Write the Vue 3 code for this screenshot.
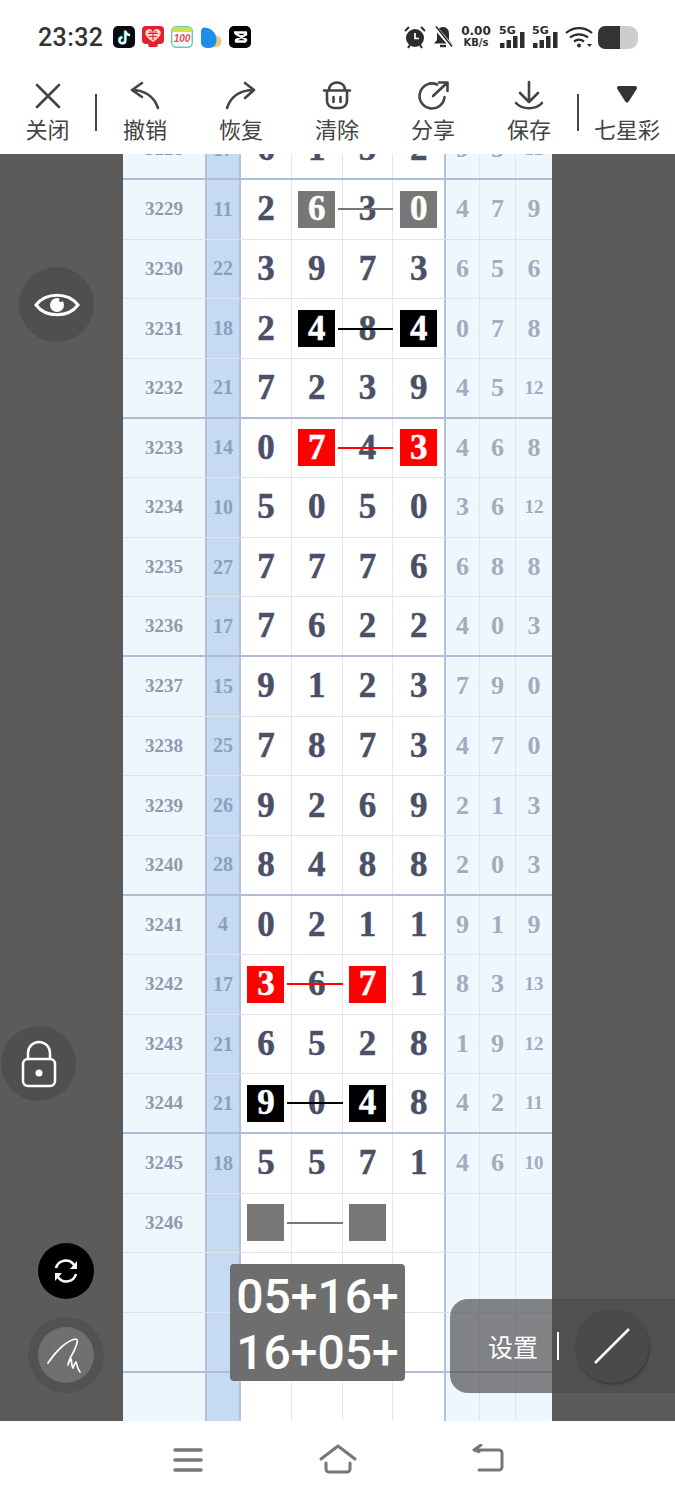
<template>
  <div class="screen">
    <header class="top">
      <div class="status">
        <span class="clock">23:32</span>
        <div class="apps">
          <svg class="app" viewBox="0 0 22 22">
            <rect width="22" height="22" rx="5" fill="#0b0b12" />
            <path d="M12 4.500v9.500a3 3 0 1 1-3-3M12 4.500c.4 2.600 2 4 4.500 4.300" fill="none" stroke="#25f4ee" stroke-width="2.400" />
            <path d="M12.600 5v9.500a3 3 0 1 1-3-3M12.600 5c.4 2.600 2 4 4.500 4.300" fill="none" stroke="#fff" stroke-width="2" />
          </svg>
          <svg class="app" viewBox="0 0 22 22">
            <path d="M4 0h14a4 4 0 0 1 4 4v10a4 4 0 0 1-4 4h-2l-1 3H7l-1-3H4a4 4 0 0 1-4-4V4a4 4 0 0 1 4-4z" fill="#e3202f" />
            <path d="M11 16C5 12 2.500 9 3.500 5.500 5 2 9.500 2 11 5.500 12.500 2 17 2 18.500 5.500 19.500 9 17 12 11 16z" fill="#f8d3c8" />
            <path d="M6 7.500h10M11 4v10M7 10.500h8M8 5l1 2M14 5l-1 2" stroke="#e3202f" stroke-width="1.100" />
          </svg>
          <svg class="app" viewBox="0 0 22 22">
            <rect x=".7" y=".7" width="20.600" height="20.600" rx="4.500" fill="#fff" stroke="#6fc4c2" stroke-width="1.400" />
            <path d="M1 5a4 4 0 0 1 4-4h12a4 4 0 0 1 4 4v1H1z" fill="#cfe24a" />
            <text x="11" y="15.500" text-anchor="middle" class="hundred">100</text>
          </svg>
          <svg class="app" viewBox="0 0 22 22">
            <circle cx="15.500" cy="15.500" r="6" fill="#f3c27d" />
            <path d="M1 5a4 4 0 0 1 6-3c6 1 9.500 6 9.500 12 0 5-3 8-7.500 8-5.500 0-8-2-8-6z" fill="#1e8fe8" />
          </svg>
          <svg class="app" viewBox="0 0 22 22">
            <rect width="22" height="22" rx="5" fill="#000" />
            <path d="M5 6.500h12v2L7 14v1.500h10M17 15.500v-2L7 8V6.500" fill="none" stroke="#fff" stroke-width="2.400" stroke-linejoin="round" />
          </svg>
        </div>
        <div class="sys">
          <svg class="alarm" viewBox="0 0 22 24">
            <circle cx="11" cy="13" r="9" fill="#2c2c2c" />
            <path d="M11 8v5.500h4" fill="none" stroke="#fff" stroke-width="1.700" />
            <path d="M1 6l4-4M21 6l-4-4M4 23l2-3M18 23l-2-3" stroke="#2c2c2c" stroke-width="2" />
          </svg>
          <svg class="bell" viewBox="0 0 20 24">
            <path d="M10 2c4 0 6 3 6 7v6l3 3.500H1L4 15V9c0-4 2-7 6-7z" fill="#2c2c2c" />
            <path d="M7 21h6" stroke="#2c2c2c" stroke-width="2.400" />
            <path d="M2 2l17 20" stroke="#fff" stroke-width="4" />
            <path d="M3 1.500l16 20" stroke="#2c2c2c" stroke-width="1.600" />
          </svg>
          <div class="speed"><b>0.00</b><span>KB/s</span></div>
          <svg class="signal" viewBox="0 0 26 24" v-for="n in 2" :key="n">
            <text x="0" y="9" class="fiveg">5G</text>
            <path d="M1 18h4.500v5H1zM7.500 15h4.500v8H7.500zM14 11h4.500v12H14zM21 7h4.500v16H21z" fill="#2c2c2c" />
          </svg>
          <svg class="wifi" viewBox="0 0 28 22">
            <path d="M1 7c7.500-6.500 18.500-6.500 26 0M5 11.500c5-4.300 13-4.300 18 0M9 15.500c3-2.300 7-2.300 10 0" fill="none" stroke="#2c2c2c" stroke-width="2.300" />
            <circle cx="14" cy="19.500" r="2" fill="#2c2c2c" />
            <path d="M22 18h5l-2.500 3z" fill="#2c2c2c" />
          </svg>
          <div class="battery"></div>
        </div>
      </div>

      <nav class="tools">
        <template v-for="t in tools" :key="t.label">
          <div class="tool" :class="t.cls">
            <svg class="tool-icon" viewBox="0 0 34 34" v-html="t.icon"></svg>
            <span>{{ t.label }}</span>
          </div>
          <i v-if="t.sep" class="tool-sep"></i>
        </template>
      </nav>
    </header>

    <main class="stage">
      <div class="chart">
        <div class="rows">
          <div v-for="(r, i) in rows" :key="i" class="row" :class="{ group: i % 4 === 0 }">
            <div class="cell id">{{ r.id }}</div>
            <div class="cell sum">{{ r.sum }}</div>
            <div v-for="(d, j) in r.nums" :key="j" class="cell num">
              <span v-if="r.mark && r.mark.at.includes(j)" class="box" :class="r.mark.color">{{ d }}</span>
              <template v-else>{{ d }}</template>
              <i v-if="r.mark && j === r.mark.at[0] + 1" class="link" :class="r.mark.color"></i>
            </div>
            <div v-for="(d, j) in r.ext" :key="j" class="cell ext" :class="{ small: d > 9 }">{{ d }}</div>
          </div>
        </div>
      </div>

      <button class="fab eye">
        <svg viewBox="0 0 46 32" width="46" height="32">
          <path d="M2 16C12 3 34 3 44 16 34 29 12 29 2 16z" fill="none" stroke="#fff" stroke-width="3" />
          <circle cx="23" cy="16" r="7" fill="#fff" />
          <circle cx="27" cy="11" r="2" fill="#4f4f4f" />
        </svg>
      </button>
      <button class="fab lock">
        <svg viewBox="0 0 36 48" width="36" height="48">
          <path d="M7 19V13a11 11 0 0 1 22 0v6" fill="none" stroke="#fff" stroke-width="2.500" />
          <rect x="2" y="19" width="32" height="27" rx="5" fill="none" stroke="#fff" stroke-width="2.500" />
          <circle cx="18" cy="33" r="3.500" fill="#fff" />
        </svg>
      </button>
      <button class="fab sync">
        <svg viewBox="0 0 32 32" width="32" height="32">
          <path d="M6 13a10 10 0 0 1 18-3M26 19a10 10 0 0 1-18 3" fill="none" stroke="#fff" stroke-width="2.500" />
          <path d="M27 6v8h-7zM5 26v-8h7z" fill="#fff" />
        </svg>
      </button>
      <button class="fab pen">
        <svg viewBox="0 0 38 38" width="38" height="38">
          <path d="M1 27C8 16 20 4 29 3c3 1 0 7-2 12-2 4-5 8-6 14 1-3 2-5 3-6 1 2 0 6 2 9 1-3 2-5 3-6 1 3 1 6 4 10" fill="none" stroke="#fff" stroke-width="1.700" stroke-linecap="round" stroke-linejoin="round" />
        </svg>
      </button>

      <div class="formula">
        <div>05+16+</div>
        <div>16+05+</div>
      </div>

      <div class="settings">
        <span class="settings-label">设置</span>
        <i class="settings-sep"></i>
        <div class="settings-btn">
          <svg viewBox="0 0 38 38" width="38" height="38">
            <path d="M2 36L36 2" stroke="#fff" stroke-width="2.500" />
          </svg>
        </div>
      </div>
    </main>

    <footer class="navbar">
      <svg viewBox="0 0 40 32" class="nav-icon">
        <path d="M7 6h26M7 16h26M7 26h26" stroke="#777" stroke-width="3.500" stroke-linecap="round" />
      </svg>
      <svg viewBox="0 0 40 32" class="nav-icon">
        <path d="M3 15L20 2l17 13" fill="none" stroke="#777" stroke-width="3" stroke-linecap="round" stroke-linejoin="round" />
        <path d="M8 19v6a3 3 0 0 0 3 3h18a3 3 0 0 0 3-3v-6" fill="none" stroke="#777" stroke-width="3" stroke-linecap="round" />
      </svg>
      <svg viewBox="0 0 40 32" class="nav-icon">
        <path d="M13 1L6 6l5 1.500M7 6h24a3 3 0 0 1 3 3v14a3 3 0 0 1-3 3H11" fill="none" stroke="#777" stroke-width="3" stroke-linecap="round" stroke-linejoin="round" />
      </svg>
    </footer>
  </div>
</template>

<script setup>
const stroke = 'fill="none" stroke="#444" stroke-width="2.600" stroke-linecap="round" stroke-linejoin="round"'

const tools = [
  { label: '关闭', cls: 'first', sep: true, icon: `<path d="M6 5l22 22M28 5L6 27" ${stroke}/>` },
  { label: '撤销', icon: `<path d="M14 3L4 10l10 7M4 10c12 0 22 6 26 18" ${stroke}/>` },
  { label: '恢复', icon: `<path d="M21 3l9 7-9 8M30 10C17 10 7 16 3 28" ${stroke}/>` },
  { label: '清除', icon: `<path d="M4 10.500h26M9 10C9 0 25 0 25 10M7 10.500v10.500a7 7 0 0 0 7 7h6a7 7 0 0 0 7-7V10.500M13.500 17v5M20.500 17v5" ${stroke}/>` },
  { label: '分享', icon: `<path d="M21 4.500A12.500 12.500 0 1 0 28.500 17M17 16L31 3M23 2.500h8.500V11" ${stroke}/>` },
  { label: '保存', sep: true, icon: `<path d="M17 2v20M8 13l9 9 9-9M4 23c6 7 20 7 26 0" ${stroke}/>` },
  { label: '七星彩', icon: '<path d="M9 8h16l-8 12.500z" fill="#333" stroke="#333" stroke-width="4" stroke-linejoin="round"/>' }
]

const gray = 'gray'
const red = 'red'
const black = 'black'

const rows = [
  { id: 3228, sum: 17, nums: [6, 1, 5, 2], ext: [9, 5, 12] },
  { id: 3229, sum: 11, nums: [2, 6, 3, 0], ext: [4, 7, 9], mark: { at: [1, 3], color: gray } },
  { id: 3230, sum: 22, nums: [3, 9, 7, 3], ext: [6, 5, 6] },
  { id: 3231, sum: 18, nums: [2, 4, 8, 4], ext: [0, 7, 8], mark: { at: [1, 3], color: black } },
  { id: 3232, sum: 21, nums: [7, 2, 3, 9], ext: [4, 5, 12] },
  { id: 3233, sum: 14, nums: [0, 7, 4, 3], ext: [4, 6, 8], mark: { at: [1, 3], color: red } },
  { id: 3234, sum: 10, nums: [5, 0, 5, 0], ext: [3, 6, 12] },
  { id: 3235, sum: 27, nums: [7, 7, 7, 6], ext: [6, 8, 8] },
  { id: 3236, sum: 17, nums: [7, 6, 2, 2], ext: [4, 0, 3] },
  { id: 3237, sum: 15, nums: [9, 1, 2, 3], ext: [7, 9, 0] },
  { id: 3238, sum: 25, nums: [7, 8, 7, 3], ext: [4, 7, 0] },
  { id: 3239, sum: 26, nums: [9, 2, 6, 9], ext: [2, 1, 3] },
  { id: 3240, sum: 28, nums: [8, 4, 8, 8], ext: [2, 0, 3] },
  { id: 3241, sum: 4, nums: [0, 2, 1, 1], ext: [9, 1, 9] },
  { id: 3242, sum: 17, nums: [3, 6, 7, 1], ext: [8, 3, 13], mark: { at: [0, 2], color: red } },
  { id: 3243, sum: 21, nums: [6, 5, 2, 8], ext: [1, 9, 12] },
  { id: 3244, sum: 21, nums: [9, 0, 4, 8], ext: [4, 2, 11], mark: { at: [0, 2], color: black } },
  { id: 3245, sum: 18, nums: [5, 5, 7, 1], ext: [4, 6, 10] },
  { id: 3246, sum: '', nums: ['', '', '', ''], ext: ['', '', ''], mark: { at: [0, 2], color: gray } },
  { id: '', sum: '', nums: ['', '', '', ''], ext: ['', '', ''] },
  { id: '', sum: '', nums: ['', '', '', ''], ext: ['', '', ''] },
  { id: '', sum: '', nums: ['', '', '', ''], ext: ['', '', ''] }
]
</script>

<style>
html, body {
  margin: 0;
  background: #fff;
}
</style>

<style scoped>
.screen {
  position: relative;
  width: 675px;
  height: 1500px;
  overflow: hidden;
  display: flex;
  flex-direction: column;
  background: #fff;
  font-family: "Noto Sans CJK SC", "Noto Sans", sans-serif;
}

.top {
  height: 154px;
  flex: none;
}

.status {
  height: 74px;
  display: flex;
  align-items: center;
  padding: 0 37px 0 38px;
}

.clock {
  font-family: Roboto, sans-serif;
  font-size: 25px;
  font-weight: 500;
  color: #333;
  letter-spacing: 0.4px;
  width: 75px;
}

.apps {
  display: flex;
  gap: 7px;
}

.app {
  width: 22px;
  height: 22px;
}

.hundred {
  font-family: "Liberation Sans", sans-serif;
  font-size: 10px;
  font-style: italic;
  font-weight: 700;
  fill: #e2505a;
}

.sys {
  margin-left: auto;
  display: flex;
  align-items: center;
}

.alarm {
  width: 22px;
  height: 24px;
}

.bell {
  width: 20px;
  height: 24px;
  margin-left: 7px;
}

.speed {
  margin-left: 7px;
  width: 32px;
  display: flex;
  flex-direction: column;
  align-items: center;
  color: #2c2c2c;
  font-family: "DejaVu Sans", sans-serif;
  line-height: 11px;
}

.speed b {
  font-size: 12px;
}

.speed span {
  font-size: 10px;
  font-weight: 700;
}

.signal {
  width: 26px;
  height: 24px;
  margin-left: 7px;
}

.fiveg {
  font-family: "DejaVu Sans", sans-serif;
  font-size: 11px;
  font-weight: 700;
  fill: #2c2c2c;
}

.wifi {
  width: 28px;
  height: 22px;
  margin-left: 7px;
}

.battery {
  width: 40px;
  height: 23px;
  margin-left: 5px;
  border-radius: 7px 9px 9px 7px;
  background: linear-gradient(90deg, #333 0 55%, #cdcdcd 55% 100%);
}

.tools {
  height: 80px;
  display: flex;
  align-items: flex-start;
}

.tool {
  width: 96px;
  flex: none;
  display: flex;
  flex-direction: column;
  align-items: center;
  color: #444;
  font-size: 22px;
  line-height: 32px;
}

.tool.first {
  width: 95px;
}

.tool-icon {
  width: 34px;
  height: 34px;
  margin-top: 6px;
  margin-bottom: -2px;
}

.tool-sep {
  width: 2px;
  height: 37px;
  margin-top: 20px;
  background: #444;
  flex: none;
}

.stage {
  flex: 1;
  min-height: 0;
  position: relative;
  background: #5b5b5b;
  overflow: hidden;
}

.chart {
  width: 429px;
  height: 100%;
  margin: 0 auto;
  overflow: hidden;
  background: #eef6fe;
}

.rows {
  margin-top: -33.6px;
}

.row {
  display: grid;
  grid-template-columns: 82px 36px repeat(4, 50.75px) repeat(3, 36px);
  height: 59.625px;
  box-sizing: border-box;
  border-bottom: 1px solid #dbe3ee;
}

.row.group {
  border-bottom: 2px solid #aebdd6;
}

.cell {
  position: relative;
  display: flex;
  align-items: center;
  justify-content: center;
  font-family: "Liberation Serif", serif;
  font-weight: 700;
  box-sizing: border-box;
}

.id {
  color: #8e9aae;
  font-size: 19px;
  background: #eef6fe;
}

.sum {
  color: #8ba0bf;
  font-size: 20px;
  background: #c6daf4;
  border-left: 2px solid #b2c2dc;
  border-right: 2px solid #b2c2dc;
}

.num {
  color: #4a5068;
  font-size: 35px;
  -webkit-text-stroke: 0.5px currentColor;
  background: #fff;
  border-right: 1px solid #e4e8ee;
}

.num:nth-child(6) {
  border-right: 0;
}

.ext {
  color: #a2acbe;
  font-size: 26px;
  background: #eef6fe;
  border-right: 1px solid #dde6f0;
}

.ext:nth-child(7) {
  border-left: 2px solid #b2c2dc;
}

.ext:last-child {
  border-right: 0;
}

.ext.small {
  font-size: 19px;
}

.box {
  width: 37px;
  height: 37px;
  display: flex;
  align-items: center;
  justify-content: center;
  color: #fff;
  -webkit-text-stroke: 0.5px #fff;
}

.box.gray {
  background: #777;
}

.box.black {
  background: #000;
}

.box.red {
  background: #f00;
}

.link {
  position: absolute;
  left: -5px;
  right: -5px;
  top: 50%;
  height: 2px;
  margin-top: -1px;
}

.link.gray {
  background: #777;
}

.link.black {
  background: #000;
}

.link.red {
  background: #f00;
}

.fab {
  position: absolute;
  padding: 0;
  border: 0;
  border-radius: 50%;
  display: flex;
  align-items: center;
  justify-content: center;
  box-sizing: border-box;
}

.eye {
  left: 19px;
  top: 113px;
  width: 75px;
  height: 75px;
  background: #4f4f4f;
}

.lock {
  left: 1px;
  top: 872px;
  width: 75px;
  height: 75px;
  background: #4f4f4f;
}

.sync {
  left: 38px;
  top: 1089px;
  width: 56px;
  height: 56px;
  background: #000;
}

.pen {
  left: 38px;
  top: 1173px;
  width: 56px;
  height: 56px;
  background: #707070;
  box-shadow: 0 0 0 10px #525252;
}

.formula {
  position: absolute;
  left: 230px;
  top: 1110px;
  width: 175px;
  height: 117px;
  box-sizing: border-box;
  padding-top: 5px;
  border-radius: 4px;
  background: #6e6e6e;
  color: #fff;
  font-family: Roboto, sans-serif;
  font-size: 48px;
  font-weight: 500;
  line-height: 56px;
  text-align: center;
}

.settings {
  position: absolute;
  left: 450px;
  top: 1145px;
  width: 225px;
  height: 94px;
  box-sizing: border-box;
  padding-left: 38px;
  border-radius: 18px 0 0 18px;
  background: rgba(75, 75, 75, 0.68);
  display: flex;
  align-items: center;
}

.settings-label {
  color: #fff;
  font-size: 25px;
  width: 69px;
  flex: none;
}

.settings-sep {
  width: 2px;
  height: 28px;
  background: #fff;
  flex: none;
}

.settings-btn {
  width: 74px;
  height: 74px;
  margin-left: 16px;
  border-radius: 50%;
  background: #4a4a4a;
  box-shadow: 1px 2px 2px rgba(0, 0, 0, 0.25);
  display: flex;
  align-items: center;
  justify-content: center;
}

.navbar {
  height: 79px;
  flex: none;
  display: flex;
  justify-content: center;
  align-items: flex-start;
  gap: 110px;
  padding-top: 23px;
  box-sizing: border-box;
  background: #fff;
}

.nav-icon {
  width: 40px;
  height: 32px;
}
</style>
